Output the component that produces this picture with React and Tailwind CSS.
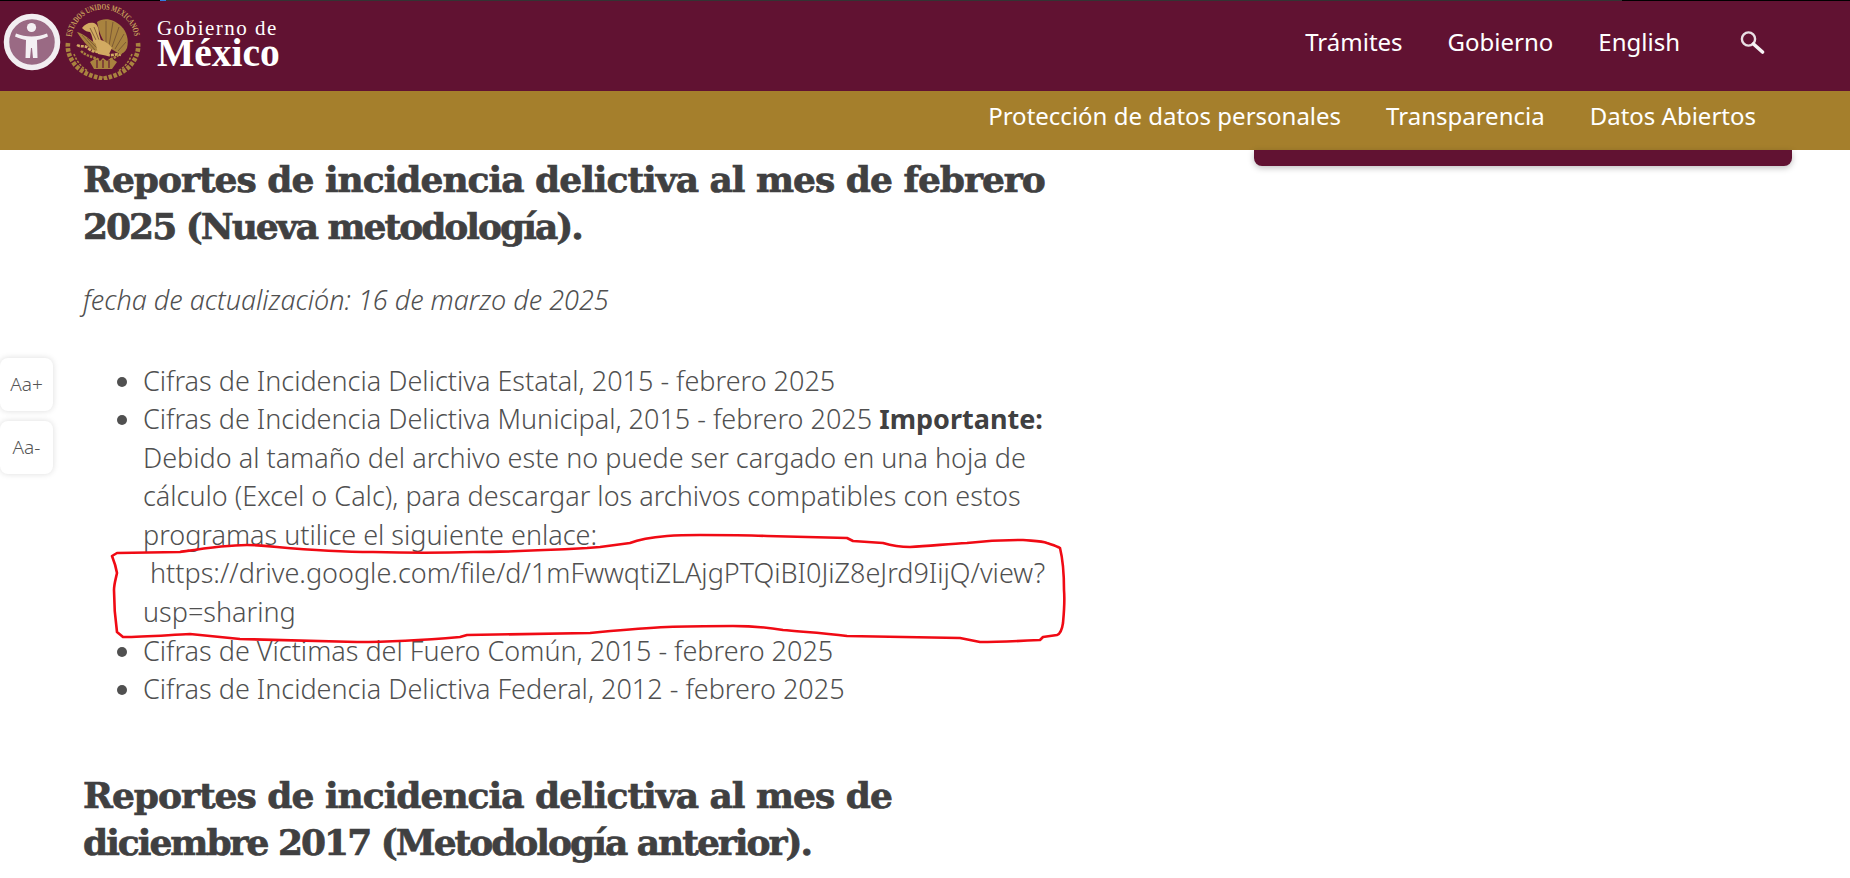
import React from "react";

const bodyFont = "font-['Noto_Sans',sans-serif]";

function A11yIcon() {
  return (
    <svg width="58" height="58" viewBox="0 0 58 58" className="shrink-0">
      <circle cx="29" cy="29" r="25.5" fill="#9a6a84" stroke="#f2eef1" strokeWidth="5.5" />
      <circle cx="28.5" cy="14.5" r="4.6" fill="#f4f0f3" />
      <path d="M13 20.5 C18 22.5 23 23.5 28.5 23.5 C34 23.5 39 22.5 44 20.5 L45 23.5 C41 25.5 37 26.5 34 27 L34.5 45 L30 45 L29 35 L28 35 L27 45 L22.5 45 L23 27 C20 26.5 16 25.5 12 23.5 Z" fill="#f4f0f3" />
    </svg>
  );
}

function Seal() {
  const gold = "#a9833f";
  const bright = "#d2ab62";
  const line = "#7d5a34";
  const bg = "#611232";
  return (
    <svg width="78" height="76" viewBox="0 0 78 76" className="shrink-0">
      <defs>
        <path id="sealArc" d="M7.5 33 A31.8 31.8 0 0 1 70.5 33" />
      </defs>
      <text fontSize="8.6" fill="#c9a25c" fontFamily="'Liberation Serif', serif" fontWeight="700">
        <textPath href="#sealArc" textLength="90" lengthAdjust="spacingAndGlyphs">ESTADOS UNIDOS MEXICANOS</textPath>
      </text>
      {/* right wing fan */}
      <path d="M33 18 C40 13 50 15 57 22 C63 28 65 36 63 44 C61 48 58 51 54 49 L44 43 C38 36 35 28 33 18 Z" fill={gold} />
      <path d="M42 42 L42 17 M45 42 L49 18 M48 43 L55 23 M51 45 L60 30 M54 47 L62 38" stroke={line} strokeWidth="1" fill="none" />
      {/* head and neck */}
      <path d="M18 24 C21 20 25 18 30 19 C34 21 35 25 35 30 L38 40 L30 42 C29 36 28 31 26 28 C24 28 21 27 18 24 Z" fill={bright} />
      <path d="M26 24 L32 36 M30 23 L35 36" stroke={line} strokeWidth="0.9" fill="none" />
      {/* left wing */}
      <path d="M13 28 C18 29 24 34 28 37 L35 42 L33 49 C27 46 20 39 13 28 Z" fill={gold} />
      <path d="M18 31 L31 46 M23 34 L33 44" stroke={line} strokeWidth="0.9" fill="none" />
      {/* body */}
      <path d="M31 36 C36 34 44 38 48 44 L44 52 L34 50 Z" fill={bright} />
      {/* serpent and branches */}
      <path d="M13 41 C18 44 20 40 25 45 C31 50 36 46 42 50 C47 53 51 49 57 51" stroke={bright} strokeWidth="2.6" strokeDasharray="3 1" fill="none" />
      <path d="M17 47 C23 53 29 52 35 56 M60 46 C54 52 50 54 45 56" stroke={gold} strokeWidth="2.4" strokeDasharray="2.5 1" fill="none" />
      {/* base */}
      <path d="M26 58 L32 54 L36 57 L39 54 L43 57 L47 54 L53 58 L48 65 L30 65 Z" fill={gold} />
      <path d="M33 56 L33 64 M39 56 L39 64 M45 56 L45 64" stroke={bg} strokeWidth="1.1" fill="none" />
      {/* wreath */}
      <path d="M4 39 C3 47 6 55 12 62 C18 68 25 71 32 73 L39 75 L46 73 C53 71 60 68 66 62 C72 55 75 47 74 39" stroke={gold} strokeWidth="4.6" strokeDasharray="3.6 1.5" fill="none" />
      <path d="M10 50 C13 58 18 64 24 67 M68 50 C65 58 60 64 54 67" stroke="#a98340" strokeWidth="1.6" strokeDasharray="2.4 1.4" fill="none" />
    </svg>
  );
}

function SearchIcon() {
  return (
    <svg width="26" height="24" viewBox="0 0 26 24" className="shrink-0">
      <circle cx="9.5" cy="9" r="6.6" fill="none" stroke="#e9dfe4" strokeWidth="2.4" />
      <path d="M14.5 14 L23.5 22" stroke="#f7f3f5" strokeWidth="3.6" strokeLinecap="round" />
    </svg>
  );
}

function RedInk() {
  const d =
    "M112 556 L117 553 L180 552 C200 549 225 545 247 545 C258 545 268 546 277 547 C310 550 340 552 373 552 C410 553 440 553 473 552 C510 552 550 550 587 548 L600 547 L630 543 C640 539 655 537 667 536 C680 535 690 535 700 535 C722 535 745 535 767 536 L847 538 L853 541 L883 543 C893 546 900 547 910 547 C930 546 948 544 967 543 C985 541 1005 540 1023 540 C1034 541 1042 541 1047 543 C1053 545 1057 546 1060 548 C1063 560 1064 575 1064 590 C1065 602 1064 612 1063 623 C1062 630 1060 634 1057 635 L1043 637 L1040 640 C1020 641 1000 642 980 642 L960 638 L847 636 C825 633 805 632 783 630 C765 627 750 626 733 626 C710 626 690 626 667 627 C645 628 622 630 600 632 L590 633 L467 635 L460 637 C425 640 392 642 357 642 L240 639 L190 634 C168 635 145 637 123 637 L117 632 C115 618 114 604 114 590 C114 584 116 578 117 573 C116 567 114 561 112 556 Z";
  return (
    <svg width="1850" height="878" viewBox="0 0 1850 878" className="absolute left-0 top-0 pointer-events-none">
      <path d={d} fill="none" stroke="#f00a14" strokeWidth="2.6" strokeLinejoin="round" />
    </svg>
  );
}

function FontButton({ label }) {
  return (
    <button className={`flex h-[53px] w-[53px] items-center justify-center rounded-[8px] bg-white text-[19px] font-light text-[#555] shadow-[0_0_6px_rgba(0,0,0,0.14)] ${bodyFont}`}>
      {label}
    </button>
  );
}

const headingClass = "font-['DejaVu_Serif',serif] font-bold text-[36px] leading-[47px] tracking-[-1px] text-[#404041] [-webkit-text-stroke:0.7px_#404041]";

export default function App() {
  return (
    <div className="relative h-[878px] w-[1850px] overflow-hidden bg-white">
      <div className="flex h-px w-full bg-black">
        <span className="w-[160px]" />
        <span className="w-[6px] bg-[#2f7de1]" />
        <span className="w-[1456px] bg-[#333]" />
      </div>
      <header className="flex h-[90px] items-start justify-between bg-[#611232] pl-[3px] pr-[85px]">
        <div className="flex items-center pt-[3px]">
          <A11yIcon />
          <div className="ml-[3px]"><Seal /></div>
          <div className="ml-[15px] flex flex-col font-['Liberation_Serif',serif] text-white">
            <span className="text-[21px] leading-[22px] tracking-[1.5px]">Gobierno de</span>
            <span className="text-[39.5px] font-bold leading-[29px]">México</span>
          </div>
        </div>
        <nav className={`flex items-center gap-[45px] pt-[26px] text-[24px] leading-[30px] text-white ${bodyFont}`}>
          <a>Trámites</a>
          <a>Gobierno</a>
          <a>English</a>
          <div className="ml-[14px]"><SearchIcon /></div>
        </nav>
      </header>
      <div className={`flex h-[59px] items-center justify-end gap-[45px] bg-[#a57f2c] pb-[9px] pr-[94px] text-[24px] text-white ${bodyFont}`}>
        <a>Protección de datos personales</a>
        <a>Transparencia</a>
        <a>Datos Abiertos</a>
      </div>
      <div className="flex items-start justify-between pl-[83px] pr-[58px]">
        <main className={`w-[980px] pt-[6px] text-[#505050] ${bodyFont}`}>
          <h1 className={headingClass}>
            Reportes de incidencia delictiva al mes de febrero <span className="tracking-[-2px]">2025 (Nueva metodología).</span>
          </h1>
          <p className="mt-[31px] text-[27px] font-light italic leading-[38.5px]">fecha de actualización: 16 de marzo de 2025</p>
          <ul className="mt-[42px] list-disc pl-[60px] text-[27px] font-light leading-[38.6px]">
            <li>Cifras de Incidencia Delictiva Estatal, 2015 - febrero 2025</li>
            <li>
              Cifras de Incidencia Delictiva Municipal, 2015 - febrero 2025 <strong className="font-bold text-[#404041]">Importante:</strong> Debido al tamaño del archivo este no puede ser cargado en una hoja de cálculo (Excel o Calc), para descargar los archivos compatibles con estos programas utilice el siguiente enlace:
              <br />
              &nbsp;https://drive.google.com/file/d/1mFwwqtiZLAjgPTQiBI0JiZ8eJrd9IijQ/view?usp=sharing
            </li>
            <li>Cifras de Víctimas del Fuero Común, 2015 - febrero 2025</li>
            <li>Cifras de Incidencia Delictiva Federal, 2012 - febrero 2025</li>
          </ul>
          <h2 className={`mt-[63px] ${headingClass}`}>
            Reportes de incidencia delictiva al mes de <span className="tracking-[-2px]">diciembre 2017 (Metodología anterior).</span>
          </h2>
        </main>
        <aside className="h-[16px] w-[538px] rounded-b-[8px] bg-[#611232] shadow-[0_2px_6px_rgba(0,0,0,0.25)]" />
      </div>
      <div className="absolute left-0 top-[358px] flex flex-col gap-[10px]">
        <FontButton label="Aa+" />
        <FontButton label="Aa-" />
      </div>
      <RedInk />
    </div>
  );
}
